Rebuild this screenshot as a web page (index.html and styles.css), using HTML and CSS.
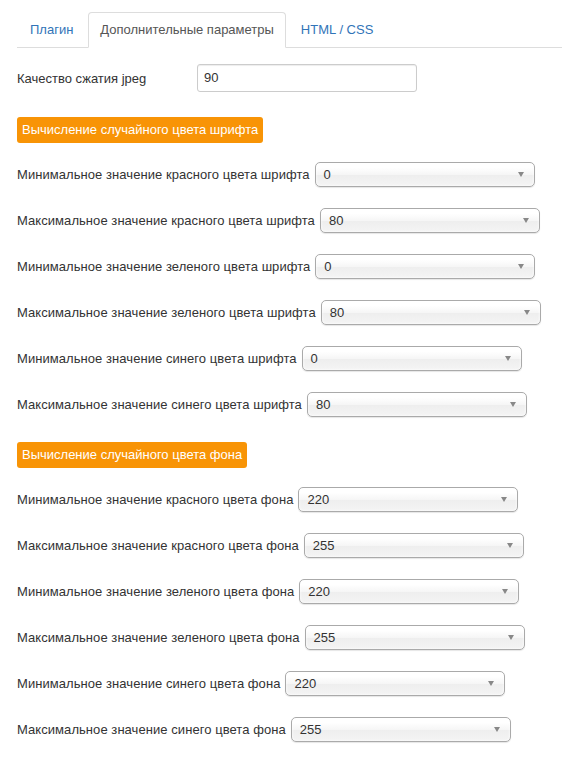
FILE: index.html
```html
<!DOCTYPE html>
<html lang="ru">
<head>
<meta charset="utf-8">
<link rel="stylesheet" href="styles.css">
</head>
<body>
<div class="page">
  <ul class="tabs">
    <li class="tab"><a>Плагин</a></li>
    <li class="tab active"><a>Дополнительные параметры</a></li>
    <li class="tab"><a>HTML / CSS</a></li>
  </ul>

  <div class="jpeg-row">
    <label class="jpeg-label">Качество сжатия jpeg</label>
    <div class="input">90</div>
  </div>

  <div class="badge">Вычисление случайного цвета шрифта</div>
  <div class="group">
    <div class="row"><span class="lbl">Минимальное значение красного цвета шрифта</span><div class="select"><span>0</span><i class="caret"></i></div></div>
    <div class="row"><span class="lbl">Максимальное значение красного цвета шрифта</span><div class="select"><span>80</span><i class="caret"></i></div></div>
    <div class="row"><span class="lbl">Минимальное значение зеленого цвета шрифта</span><div class="select"><span>0</span><i class="caret"></i></div></div>
    <div class="row"><span class="lbl">Максимальное значение зеленого цвета шрифта</span><div class="select"><span>80</span><i class="caret"></i></div></div>
    <div class="row"><span class="lbl">Минимальное значение синего цвета шрифта</span><div class="select"><span>0</span><i class="caret"></i></div></div>
    <div class="row"><span class="lbl">Максимальное значение синего цвета шрифта</span><div class="select"><span>80</span><i class="caret"></i></div></div>
  </div>

  <div class="badge">Вычисление случайного цвета фона</div>
  <div class="group">
    <div class="row"><span class="lbl">Минимальное значение красного цвета фона</span><div class="select"><span>220</span><i class="caret"></i></div></div>
    <div class="row"><span class="lbl">Максимальное значение красного цвета фона</span><div class="select"><span>255</span><i class="caret"></i></div></div>
    <div class="row"><span class="lbl">Минимальное значение зеленого цвета фона</span><div class="select"><span>220</span><i class="caret"></i></div></div>
    <div class="row"><span class="lbl">Максимальное значение зеленого цвета фона</span><div class="select"><span>255</span><i class="caret"></i></div></div>
    <div class="row"><span class="lbl">Минимальное значение синего цвета фона</span><div class="select"><span>220</span><i class="caret"></i></div></div>
    <div class="row"><span class="lbl">Максимальное значение синего цвета фона</span><div class="select"><span>255</span><i class="caret"></i></div></div>
  </div>
</div>
</body>
</html>
```

FILE: styles.css
```css
html, body {
  margin: 0;
  padding: 0;
  background: #fff;
}
body {
  font-family: "Liberation Sans", Arial, sans-serif;
  font-size: 13px;
  color: #333;
}
.page {
  padding: 12px 0 0 17px;
}
.tabs {
  list-style: none;
  margin: 0 0 16px 0;
  padding: 0;
  display: flex;
  border-bottom: 1px solid #ddd;
  height: 35px;
}
.tab {
  margin-right: 2px;
  margin-bottom: -1px;
}
.tab a {
  display: block;
  padding: 8px 12px;
  line-height: 18px;
  border: 1px solid transparent;
  border-radius: 4px 4px 0 0;
  color: #3174b8;
}
.tab.active a {
  color: #555;
  background: #fff;
  border-color: #ddd #ddd transparent #ddd;
  padding: 8px 11px 8px 11px;
}
.jpeg-row {
  display: flex;
  align-items: center;
  margin-bottom: 25px;
}
.jpeg-label {
  width: 180px;
}
.input {
  width: 206px;
  height: 18px;
  line-height: 18px;
  padding: 4px 6px;
  border: 1px solid #ccc;
  border-radius: 3px;
  box-shadow: inset 0 1px 1px rgba(0,0,0,0.075);
}
.badge {
  display: inline-block;
  background: #f89406;
  color: #fff;
  height: 26px;
  line-height: 26px;
  padding: 0 5px;
  border-radius: 3px;
  margin-bottom: 19px;
}
.group {
  display: flex;
  flex-direction: column;
  gap: 21px;
  margin-bottom: 25px;
}
.row {
  display: flex;
  align-items: center;
  gap: 5px;
  height: 25px;
}
.lbl {
  letter-spacing: 0.06px;
}
.select {
  box-sizing: border-box;
  width: 220px;
  height: 25px;
  display: flex;
  align-items: center;
  justify-content: space-between;
  padding: 0 10px 0 8px;
  border: 1px solid #aaa;
  border-radius: 5px;
  background: linear-gradient(#fff 20%, #f6f6f6 50%, #eee 52%, #f4f4f4 100%);
  box-shadow: inset 0 0 3px #fff, 0 1px 1px rgba(0,0,0,0.1);
  color: #333;
}
.caret {
  width: 0;
  height: 0;
  border-left: 3.5px solid transparent;
  border-right: 3.5px solid transparent;
  border-top: 5px solid #888;
}
```
